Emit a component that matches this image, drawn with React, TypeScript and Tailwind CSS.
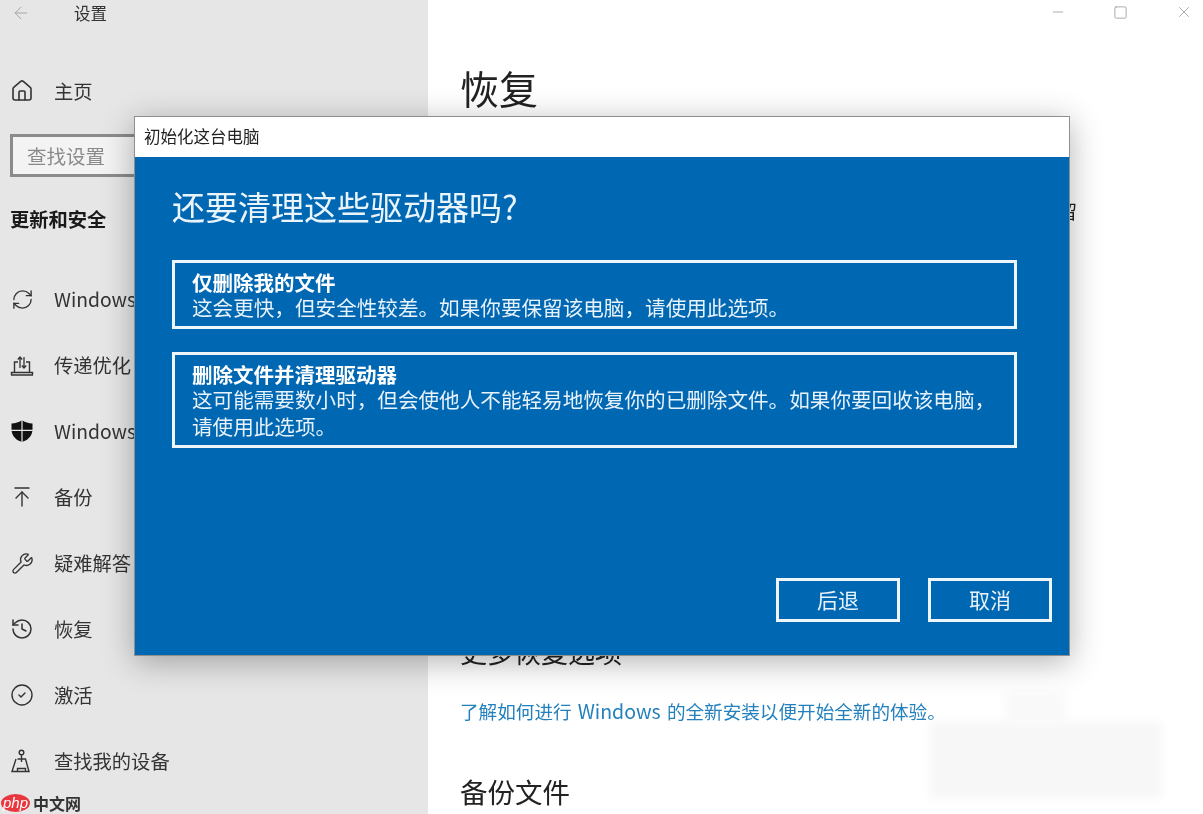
import { ArrowLeft, ArrowUpToLine, CircleCheck, History, House, Minus, RefreshCw, Square, Wrench, X } from "lucide-react";
import type { ReactNode } from "react";

const cjk = "font-['Noto_Sans_CJK_SC','Noto_Sans',sans-serif]";

function DeliveryIcon() {
  return (
    <svg width="24" height="24" viewBox="0 0 24 24" fill="none" stroke="#333" strokeWidth="1.4">
      <path d="M1 22h22M1.500 22v-2.500h21V22M4.500 19.500V9H8M16 9h3.500v10.500" />
      <path d="M10 15V4M7.800 6.500 10 4l2.200 2.500M14 4v11M11.800 12.500 14 15l2.200-2.500" strokeWidth="1.300" />
    </svg>
  );
}

function ShieldIcon() {
  return (
    <svg width="24" height="24" viewBox="0 0 24 24" fill="#111">
      <path d="M11.400 1.500C9 3.200 5.500 4.300 1.500 4.500v6.300h9.900zM12.600 1.500c2.400 1.700 5.900 2.800 9.900 3v6.300h-9.900zM1.600 12h9.800v10.800C6.400 21.200 2.400 17.500 1.600 12zM12.600 12h9.800c-.8 5.500-4.800 9.200-9.800 10.800z" />
    </svg>
  );
}

function FindDeviceIcon() {
  return (
    <svg width="24" height="24" viewBox="0 0 24 24" fill="none" stroke="#333" strokeWidth="1.4">
      <circle cx="11.500" cy="3.500" r="2.300" />
      <path d="M11.500 6v7M7.500 10h8l3.500 12.500H2L6 10M7.500 22.500v-3h8v3" />
    </svg>
  );
}

function NavRow({ icon, label }: { icon: ReactNode; label: string }) {
  return (
    <div className="flex h-[66px] items-center">
      <div className="flex w-[24px] justify-center text-[#333]">{icon}</div>
      <span className="ml-[20px] text-[19.300px] whitespace-nowrap text-[#333]">{label}</span>
    </div>
  );
}

function OptionBox({ title, lines }: { title: string; lines: string[] }) {
  return (
    <div className="w-[845px] border-[3px] border-[#eef6fb] pt-[7px] pb-[5px] pl-[17px]">
      <div className="text-[20.500px] leading-[24px] font-bold text-white">{title}</div>
      {lines.map((line) => (
        <div key={line} className="text-[20.600px] leading-[27px] whitespace-nowrap text-[#e8f2fa]">
          {line}
        </div>
      ))}
    </div>
  );
}

function DialogButton({ label }: { label: string }) {
  return (
    <div className="flex h-[44px] w-[124px] items-center justify-center border-[3px] border-[#eef6fb] text-[21px] text-[#e8f2fa]">
      {label}
    </div>
  );
}

export default function App() {
  return (
    <div className={`relative flex h-[814px] w-[1203px] overflow-hidden bg-white ${cjk} blur-[0.4px]`}>
      {/* sidebar */}
      <aside className="flex w-[428px] shrink-0 flex-col overflow-hidden bg-[#e6e6e6] pl-[10px]">
        <div className="flex h-[26px] items-center">
          <ArrowLeft size={20} strokeWidth={1.2} className="ml-[1px] text-[#a6a6a6]" />
          <span className="ml-[43px] text-[16.500px] text-[#333]">设置</span>
        </div>
        <div className="mt-[32px]">
          <NavRow icon={<House size={24} strokeWidth={1.6} />} label="主页" />
        </div>
        <div className="mt-[10px] flex h-[43px] w-[300px] items-center border-[3px] border-[#8b8b8b] bg-[#f3f3f3] pl-[14px] text-[19.500px] text-[#8a8a8a]">
          查找设置
        </div>
        <div className="mt-[27px] h-[30px] text-[19.300px] leading-[30px] font-bold text-[#1a1a1a]">更新和安全</div>
        <div className="mt-[32px]">
          <NavRow icon={<RefreshCw size={23} strokeWidth={1.4} />} label="Windows 更新" />
          <NavRow icon={<DeliveryIcon />} label="传递优化" />
          <NavRow icon={<ShieldIcon />} label="Windows 安全中心" />
          <NavRow icon={<ArrowUpToLine size={24} strokeWidth={1.4} />} label="备份" />
          <NavRow icon={<Wrench size={23} strokeWidth={1.4} />} label="疑难解答" />
          <NavRow icon={<History size={24} strokeWidth={1.5} />} label="恢复" />
          <NavRow icon={<CircleCheck size={24} strokeWidth={1.4} />} label="激活" />
          <NavRow icon={<FindDeviceIcon />} label="查找我的设备" />
        </div>
      </aside>

      {/* main panel */}
      <main className="flex-1 overflow-hidden pl-[32px]">
        <div className="flex h-[24px] items-center justify-end text-[#999]">
          <Minus size={16} strokeWidth={1.2} className="mr-[47px]" />
          <Square size={15} strokeWidth={1.3} className="mr-[47px]" />
          <X size={18} strokeWidth={1.1} className="mr-[10px]" />
        </div>
        <h1 className="mt-[35px] h-[56px] text-[39px] leading-[56px] text-[#222]">恢复</h1>
        <p className="mt-[82px] h-[28px] text-[19.300px] leading-[28px] whitespace-nowrap text-[#222]">
          如果电脑未正常运行，重置电脑可能会解决问题。重置时，可以选择保留
        </p>
        <h2 className="mt-[408px] h-[38px] text-[27px] leading-[38px] text-[#222]">更多恢复选项</h2>
        <a className="mt-[25px] block h-[30px] text-[18.600px] leading-[30px] whitespace-nowrap text-[#2480bd]">
          了解如何进行 <span className="mx-[2px] text-[19.500px]">Windows</span> 的全新安装以便开始全新的体验。
        </a>
        <h2 className="mt-[45px] h-[40px] text-[27.500px] leading-[40px] text-[#222]">备份文件</h2>
      </main>

      {/* dialog */}
      <section className="absolute top-[116px] left-[134px] flex h-[540px] w-[936px] flex-col border border-[#8f8f8f] bg-[#0067b3] shadow-[0_6px_30px_rgba(0,0,0,0.3)]">
        <div className="flex h-[40px] shrink-0 items-center bg-white pb-[2px] pl-[9px] text-[16.500px] text-[#222]">初始化这台电脑</div>
        <div className="flex flex-1 flex-col pt-[24px] pr-[17px] pb-[33px] pl-[37px]">
          <h2 className="h-[50px] text-[33px] leading-[50px] text-[#eaf4fb]">还要清理这些驱动器吗?</h2>
          <div className="mt-[29px] flex flex-col gap-[23px]">
            <OptionBox title="仅删除我的文件" lines={["这会更快，但安全性较差。如果你要保留该电脑，请使用此选项。"]} />
            <OptionBox
              title="删除文件并清理驱动器"
              lines={["这可能需要数小时，但会使他人不能轻易地恢复你的已删除文件。如果你要回收该电脑，", "请使用此选项。"]}
            />
          </div>
          <div className="mt-auto flex justify-end gap-[28px]">
            <DialogButton label="后退" />
            <DialogButton label="取消" />
          </div>
        </div>
      </section>

      {/* watermark smudge */}
      <div className="absolute top-[722px] left-[930px] h-[76px] w-[232px] bg-[#f7f7f7] blur-[5px]" />
      <div className="absolute top-[690px] left-[1005px] h-[36px] w-[60px] bg-[#f9f9f9] blur-[5px]" />

      {/* php.cn badge */}
      <div className="absolute bottom-[2px] left-[1px] flex items-center">
        <div className="flex h-[18px] w-[29px] items-center justify-center rounded-[50%] bg-[#e8373f] font-['Liberation_Sans',sans-serif] text-[15px] text-white italic">
          php
        </div>
        <span className="ml-[3px] text-[16px] leading-[18px] font-bold text-[#333]">中文网</span>
      </div>
    </div>
  );
}
